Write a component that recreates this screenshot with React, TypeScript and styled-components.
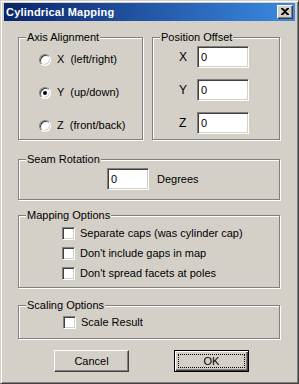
import styled, { createGlobalStyle } from 'styled-components';

const Face = '#d4d0c8';
const Shadow = '#808080';
const DarkShadow = '#404040';
const Highlight = '#ffffff';

const GlobalStyle = createGlobalStyle`
    html, body {
        margin: 0;
        padding: 0;
        background: ${Face};
    }
    body {
        font-family: 'Liberation Sans', Arial, sans-serif;
        font-size: 11px;
        color: #000;
    }
`;

const App = () => {
    return (
        <>
            <GlobalStyle />
            <Window>
                <TitleBar>
                    <Title>Cylindrical Mapping</Title>
                    <CloseButton aria-label="Close">
                        <svg width="8" height="7" viewBox="0 0 8 7">
                            <path
                                d="M0 0h2l2 2 2-2h2v1L5 3.5 8 6v1H6L4 5 2 7H0V6l3-2.5L0 1z"
                                fill="#000"
                            />
                        </svg>
                    </CloseButton>
                </TitleBar>
                <Content>
                    <TopRow>
                        <Group $width={125} $height={103}>
                            <Caption>Axis Alignment</Caption>
                            <RadioList>
                                <OptionRow>
                                    <Radio $checked={false} />
                                    <Label>X  (left/right)</Label>
                                </OptionRow>
                                <OptionRow>
                                    <Radio $checked />
                                    <Label>Y  (up/down)</Label>
                                </OptionRow>
                                <OptionRow>
                                    <Radio $checked={false} />
                                    <Label>Z  (front/back)</Label>
                                </OptionRow>
                            </RadioList>
                        </Group>
                        <Group $width={128} $height={103}>
                            <Caption>Position Offset</Caption>
                            <OffsetList>
                                {['X', 'Y', 'Z'].map((axis) => (
                                    <OffsetRow key={axis}>
                                        <AxisLabel>{axis}</AxisLabel>
                                        <Field $width={52}>0</Field>
                                    </OffsetRow>
                                ))}
                            </OffsetList>
                        </Group>
                    </TopRow>
                    <Group $width={262} $height={41} $top={19}>
                        <Caption>Seam Rotation</Caption>
                        <SeamRow>
                            <Field $width={42}>0</Field>
                            <Label>Degrees</Label>
                        </SeamRow>
                    </Group>
                    <Group $width={262} $height={73} $top={15}>
                        <Caption>Mapping Options</Caption>
                        <CheckList $left={43} $top={11}>
                            <OptionRow>
                                <Checkbox />
                                <CheckLabel>Separate caps (was cylinder cap)</CheckLabel>
                            </OptionRow>
                            <OptionRow>
                                <Checkbox />
                                <CheckLabel>Don't include gaps in map</CheckLabel>
                            </OptionRow>
                            <OptionRow>
                                <Checkbox />
                                <CheckLabel>Don't spread facets at poles</CheckLabel>
                            </OptionRow>
                        </CheckList>
                    </Group>
                    <Group $width={262} $height={34} $top={17}>
                        <Caption>Scaling Options</Caption>
                        <CheckList $left={44} $top={10}>
                            <OptionRow>
                                <Checkbox />
                                <CheckLabel>Scale Result</CheckLabel>
                            </OptionRow>
                        </CheckList>
                    </Group>
                    <ButtonRow>
                        <Button>Cancel</Button>
                        <Button $default>
                            <Focus>OK</Focus>
                        </Button>
                    </ButtonRow>
                </Content>
            </Window>
        </>
    );
};

interface GroupProps {
    $width: number;
    $height: number;
    $top?: number;
}

const Window = styled.div`
    box-sizing: border-box;
    width: 299px;
    height: 384px;
    background: ${Face};
    border: 1px solid;
    border-color: ${Face} ${DarkShadow} ${DarkShadow} ${Face};
    box-shadow: inset 1px 1px ${Highlight}, inset -1px -1px ${Shadow};
    padding: 2px 3px 3px 3px;
    display: flex;
    flex-direction: column;
`;

const TitleBar = styled.div`
    height: 18px;
    display: flex;
    align-items: center;
    justify-content: space-between;
    padding: 0 2px 0 2px;
    background: linear-gradient(to right, #0a246a, #3b8be3);
`;

const Title = styled.div`
    color: #fff;
    font-weight: bold;
    font-size: 11px;
    letter-spacing: 0.2px;
`;

const CloseButton = styled.div`
    box-sizing: border-box;
    width: 16px;
    height: 14px;
    background: ${Face};
    border: 1px solid;
    border-color: ${Highlight} ${DarkShadow} ${DarkShadow} ${Highlight};
    box-shadow: inset -1px -1px ${Shadow};
    display: flex;
    align-items: center;
    justify-content: center;
    padding-bottom: 1px;
`;

const Content = styled.div`
    display: flex;
    flex-direction: column;
    padding: 16px 0 0 14px;
`;

const TopRow = styled.div`
    display: flex;
    gap: 9px;
`;

const Group = styled.div<GroupProps>`
    position: relative;
    box-sizing: border-box;
    width: ${(props) => props.$width}px;
    height: ${(props) => props.$height}px;
    margin-top: ${(props) => props.$top ?? 0}px;
    border: 1px solid ${Shadow};
    box-shadow: inset 1px 1px ${Highlight}, 1px 1px ${Highlight};
`;

const Caption = styled.div`
    position: absolute;
    top: -7px;
    left: 7px;
    padding: 0 1px 0 1px;
    line-height: 13px;
    background: ${Face};
`;

const RadioList = styled.div`
    display: flex;
    flex-direction: column;
    gap: 20px;
    padding: 15px 0 0 20px;
`;

const OptionRow = styled.div`
    display: flex;
    align-items: center;
    height: 13px;
`;

const Label = styled.span`
    white-space: pre;
    margin-left: 6px;
    line-height: 13px;
`;

const CheckLabel = styled(Label)`
    margin-left: 5px;
`;

const Radio = styled.span<{ $checked: boolean }>`
    box-sizing: border-box;
    width: 12px;
    height: 12px;
    border-radius: 50%;
    background: ${Highlight};
    border: 1px solid;
    border-color: ${Shadow} ${Highlight} ${Highlight} ${Shadow};
    box-shadow: inset 1px 1px ${DarkShadow}, inset -1px -1px ${Face};
    display: flex;
    align-items: center;
    justify-content: center;
    &::after {
        content: '';
        width: 4px;
        height: 4px;
        border-radius: 50%;
        background: ${(props) => (props.$checked ? '#000' : 'transparent')};
    }
`;

const Checkbox = styled.span`
    box-sizing: border-box;
    width: 13px;
    height: 13px;
    background: ${Highlight};
    border: 1px solid;
    border-color: ${Shadow} ${Highlight} ${Highlight} ${Shadow};
    box-shadow: inset 1px 1px ${DarkShadow}, inset -1px -1px ${Face};
`;

const OffsetList = styled.div`
    display: flex;
    flex-direction: column;
    gap: 11px;
    padding: 8px 0 0 26px;
`;

const OffsetRow = styled.div`
    display: flex;
    align-items: center;
`;

const AxisLabel = styled.span`
    width: 18px;
    font-size: 12px;
`;

const Field = styled.div<{ $width: number }>`
    box-sizing: border-box;
    width: ${(props) => props.$width}px;
    height: 22px;
    background: ${Highlight};
    border: 1px solid;
    border-color: ${Shadow} ${Highlight} ${Highlight} ${Shadow};
    box-shadow: inset 1px 1px ${DarkShadow}, inset -1px -1px ${Face};
    padding: 3px 0 0 3px;
    font-size: 11px;
    line-height: 14px;
`;

const SeamRow = styled.div`
    display: flex;
    align-items: center;
    padding: 8px 0 0 88px;
    span {
        margin-left: 8px;
    }
`;

const CheckList = styled.div<{ $left: number; $top: number }>`
    display: flex;
    flex-direction: column;
    gap: 7px;
    padding: ${(props) => props.$top}px 0 0 ${(props) => props.$left}px;
`;

const ButtonRow = styled.div`
    display: flex;
    gap: 45px;
    margin-top: 11px;
    padding-left: 36px;
`;

const Button = styled.div<{ $default?: boolean }>`
    box-sizing: border-box;
    width: 75px;
    height: 22px;
    background: ${Face};
    display: flex;
    align-items: center;
    justify-content: center;
    font-size: 11px;
    border: 1px solid;
    border-color: ${(props) =>
        props.$default
            ? '#000'
            : `${Highlight} ${DarkShadow} ${DarkShadow} ${Highlight}`};
    box-shadow: ${(props) =>
        props.$default
            ? `inset 1px 1px ${Highlight}, inset -1px -1px ${DarkShadow}, inset -2px -2px ${Shadow}`
            : `inset -1px -1px ${Shadow}`};
    padding: ${(props) => (props.$default ? '3px' : '0')};
`;

const Focus = styled.div`
    flex: 1;
    align-self: stretch;
    display: flex;
    align-items: center;
    justify-content: center;
    border: 1px dotted #000;
`;

export default App;
